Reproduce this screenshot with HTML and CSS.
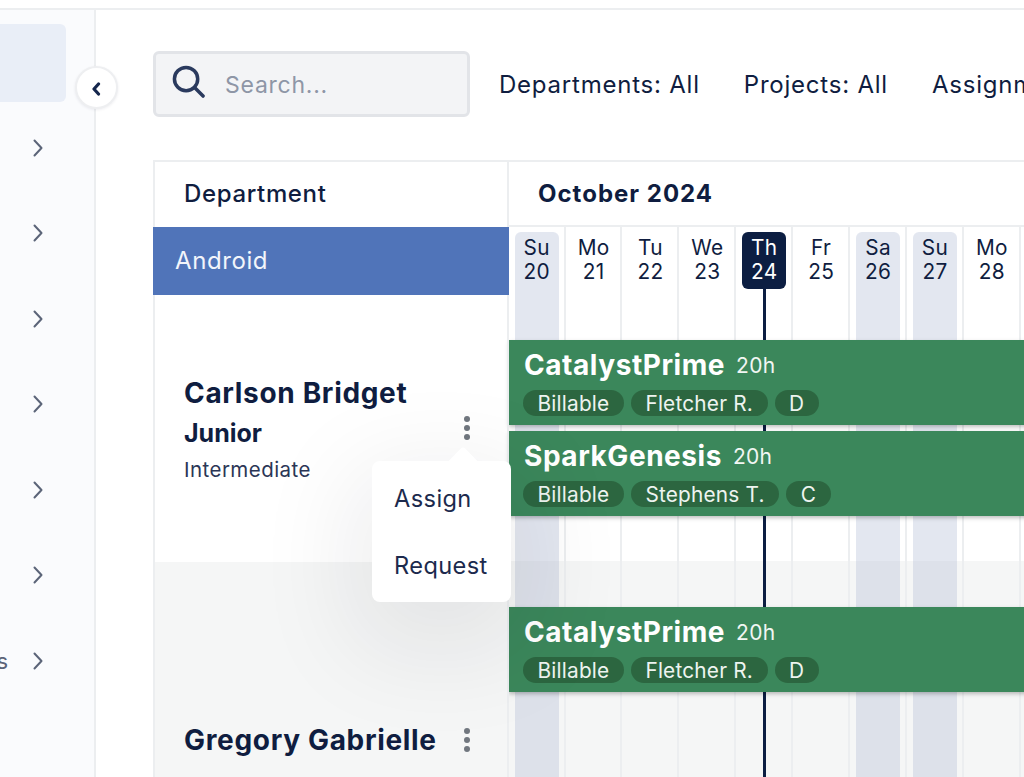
FILE: index.html
```html
<!DOCTYPE html>
<html lang="en">
<head>
<meta charset="utf-8">
<title>Schedule</title>
<link rel="stylesheet" href="styles.css">
</head>
<body>
<div class="topbar"></div>
<div class="app">
  <aside class="sidebar">
    <div class="nav-active"></div>
    <div class="nav-list">
      <div class="nav-item"><svg class="chev" viewBox="0 0 10 18"><path d="M1.5 1.5 8.5 9l-7 7.5"/></svg></div>
      <div class="nav-item"><svg class="chev" viewBox="0 0 10 18"><path d="M1.5 1.5 8.5 9l-7 7.5"/></svg></div>
      <div class="nav-item"><svg class="chev" viewBox="0 0 10 18"><path d="M1.5 1.5 8.5 9l-7 7.5"/></svg></div>
      <div class="nav-item"><svg class="chev" viewBox="0 0 10 18"><path d="M1.5 1.5 8.5 9l-7 7.5"/></svg></div>
      <div class="nav-item"><svg class="chev" viewBox="0 0 10 18"><path d="M1.5 1.5 8.5 9l-7 7.5"/></svg></div>
      <div class="nav-item"><svg class="chev" viewBox="0 0 10 18"><path d="M1.5 1.5 8.5 9l-7 7.5"/></svg></div>
      <div class="nav-item"><span class="nav-label">Settings</span><svg class="chev" viewBox="0 0 10 18"><path d="M1.5 1.5 8.5 9l-7 7.5"/></svg></div>
    </div>
  </aside>
  <button class="collapse" aria-label="Collapse"><svg viewBox="0 0 10 14"><path d="M7.5 2 3 7l4.5 5"/></svg></button>
  <main class="main">
    <div class="toolbar">
      <label class="search">
        <svg class="search-icon" viewBox="0 0 34 34"><circle cx="14.5" cy="14.5" r="12"/><path d="M23.5 23.5 32 32"/></svg>
        <input class="search-input" placeholder="Search...">
      </label>
      <div class="filters">
        <span>Departments: All</span>
        <span>Projects: All</span>
        <span>Assignments: All</span>
      </div>
    </div>
    <div class="table">
      <div class="left">
        <div class="left-head">Department</div>
        <div class="dept">Android</div>
        <div class="person person-one">
          <div class="name">Carlson Bridget</div>
          <div class="line">
            <span class="level">Junior</span>
            <span class="dots"><i></i><i></i><i></i></span>
          </div>
          <div class="grade">Intermediate</div>
          <div class="popover">
            <span class="popover-arrow"></span>
            <div class="popover-item">Assign</div>
            <div class="popover-item">Request</div>
          </div>
        </div>
        <div class="person person-two">
          <div class="line">
            <span class="name">Gregory Gabrielle</span>
            <span class="dots"><i></i><i></i><i></i></span>
          </div>
        </div>
      </div>
      <div class="right">
        <div class="month">October 2024</div>
        <div class="timeline">
          <div class="band"></div>
          <div class="columns">
            <div class="day weekend"><span>Su<br>20</span></div>
            <div class="day"><span>Mo<br>21</span></div>
            <div class="day"><span>Tu<br>22</span></div>
            <div class="day"><span>We<br>23</span></div>
            <div class="day today"><span>Th<br>24</span></div>
            <div class="day"><span>Fr<br>25</span></div>
            <div class="day weekend"><span>Sa<br>26</span></div>
            <div class="day weekend"><span>Su<br>27</span></div>
            <div class="day"><span>Mo<br>28</span></div>
            <div class="day"><span></span></div>
          </div>
          <div class="bars">
            <div class="bar">
              <div class="bar-title"><strong>CatalystPrime</strong><span>20h</span></div>
              <div class="tags"><span>Billable</span><span>Fletcher R.</span><span>D</span></div>
            </div>
            <div class="bar">
              <div class="bar-title"><strong>SparkGenesis</strong><span>20h</span></div>
              <div class="tags"><span>Billable</span><span>Stephens T.</span><span>C</span></div>
            </div>
            <div class="bar bar-next">
              <div class="bar-title"><strong>CatalystPrime</strong><span>20h</span></div>
              <div class="tags"><span>Billable</span><span>Fletcher R.</span><span>D</span></div>
            </div>
          </div>
        </div>
      </div>
    </div>
  </main>
</div>
</body>
</html>
```

FILE: styles.css
```css
* { box-sizing: border-box; }
html, body { height: 100%; }
body {
  margin: 0;
  height: 777px;
  overflow: hidden;
  background: #fff;
  color: #0f1d40;
  font-family: Inter, "Liberation Sans", sans-serif;
}
.topbar { height: 10px; border-bottom: 2px solid #eceef0; }
.app { position: relative; display: flex; height: 767px; }

/* Sidebar */
.sidebar {
  position: relative;
  flex: 0 0 96px;
  background: #fafbfd;
  border-right: 2px solid #eceef0;
  overflow: hidden;
  padding-top: 14px;
}
.nav-active { width: 66px; height: 78px; background: #e9eef7; border-radius: 0 6px 6px 0; }
.nav-list { padding-top: 3px; }
.nav-item {
  height: 85.5px;
  width: 43px;
  display: flex;
  align-items: center;
  justify-content: flex-end;
  gap: 25px;
  color: #5b6478;
  font-size: 22px;
}
.nav-label { flex: none; }
.chev { flex: none; width: 10px; height: 18px; fill: none; stroke: #5b6478; stroke-width: 2; stroke-linecap: round; stroke-linejoin: round; }
.collapse {
  position: absolute;
  left: 75px;
  top: 56px;
  width: 43px;
  height: 43px;
  padding: 0;
  display: flex;
  align-items: center;
  justify-content: center;
  background: #fff;
  border: 2px solid #eeeff1;
  border-radius: 50%;
  box-shadow: 0 1px 3px rgba(20, 30, 60, .08);
}
.collapse svg { width: 10px; height: 14px; margin: 2px 0 0 -2px; fill: none; stroke: #15264d; stroke-width: 3.2; stroke-linecap: round; stroke-linejoin: round; }

/* Main */
.main { flex: 1; min-width: 0; padding: 41px 0 0 57px; overflow: hidden; }
.toolbar { display: flex; align-items: center; gap: 29px; height: 66px; white-space: nowrap; }
.search {
  flex: 0 0 317px;
  min-width: 0;
  height: 66px;
  display: flex;
  align-items: center;
  gap: 20px;
  padding-left: 16px;
  background: #f3f4f6;
  border: 3px solid #e2e4e8;
  border-radius: 6px;
}
.search-icon { flex: none; width: 33px; height: 33px; margin-bottom: 5px; fill: none; stroke: #2a3a5e; stroke-width: 3.6; stroke-linecap: round; }
.search-input { flex: 1; width: 0; min-width: 0; border: 0; outline: 0; padding: 2px 0 0; background: transparent; font: 400 23px Inter, sans-serif; letter-spacing: .75px; }
.search-input::placeholder { color: #8e96a6; opacity: 1; }
.filters { display: flex; gap: 44px; font-size: 24px; letter-spacing: .78px; }

/* Table */
.table {
  display: flex;
  margin-top: 43px;
  width: 900px;
  height: 620px;
  border-top: 2px solid #eceef0;
}
.left { position: relative; z-index: 2; flex: 0 0 356px; border-left: 2px solid #eceef0; }
.left-head { height: 65px; padding: 0 0 2px 29px; display: flex; align-items: center; font-size: 24px; font-weight: 500; letter-spacing: .65px; border-right: 2px solid #eceef0; }
.dept { height: 68px; margin-left: -2px; padding: 0 0 1px 22px; display: flex; align-items: center; color: #f2f5fb; background: #5074b9; font-size: 24px; letter-spacing: .6px; }
.person { position: relative; padding: 0 37px 0 29px; border-right: 2px solid #eceef0; }
.person-one { z-index: 3; height: 267px; padding-top: 82px; }
.person-two { height: 240px; padding-top: 162px; background: #f5f6f6; }
.name { font-size: 28px; font-weight: 700; line-height: 32px; letter-spacing: .67px; }
.line { display: flex; align-items: center; justify-content: space-between; }
.level { font-size: 25px; font-weight: 700; line-height: 32px; margin-top: 8px; }
.grade { margin-top: 6px; font-size: 20.5px; line-height: 30px; color: #2b3656; letter-spacing: .45px; }
.dots { display: flex; flex-direction: column; gap: 3px; }
.dots i { width: 6px; height: 6px; border-radius: 50%; background: #71777f; }
.person-one .dots { position: relative; top: -1px; }
.popover {
  position: absolute;
  left: 217px;
  top: 166px;
  width: 139px;
  height: 141px;
  padding: 3.5px 0 0 22px;
  background: #fff;
  border-radius: 8px;
  box-shadow: 0 30px 100px 20px rgba(20, 30, 40, .08);
}
.popover-arrow {
  position: absolute;
  left: 80px;
  top: -10px;
  width: 22px;
  height: 22px;
  background: #fff;
  transform: rotate(45deg);
  border-radius: 3px;
}
.popover-item { position: relative; height: 67px; display: flex; align-items: center; font-size: 23.6px; color: #1c2a4d; letter-spacing: .4px; }

/* Timeline */
.right { flex: 1; min-width: 0; }
.month { height: 65px; padding-left: 29px; display: flex; align-items: center; font-size: 24px; font-weight: 700; letter-spacing: 1px; border-bottom: 2px solid #eceef0; }
.timeline { position: relative; height: 553px; }
.band { position: absolute; left: 0; right: 0; top: 334px; bottom: 0; background: #f5f6f6; }
.columns { position: absolute; inset: 0 0 0 -.3px; display: flex; }
.day { position: relative; flex: 0 0 56.9px; padding: 5px 4.9px 0 6px; border-right: 2px solid #eceef0; font-size: 20.8px; line-height: 24px; letter-spacing: .3px; text-align: center; }
.day span { display: block; height: 57px; padding-top: 4px; border-radius: 6px; }
.weekend::before { content: ""; position: absolute; left: 6px; width: 44px; top: 5px; bottom: 0; background: rgba(182, 192, 215, .38); border-radius: 6px 6px 0 0; }
.weekend span { position: relative; }
.today span { position: relative; z-index: 1; background: #0c1e42; color: #fff; }
.today::after { content: ""; position: absolute; left: 26.5px; top: 59px; bottom: 0; width: 3px; background: #0c1e42; }
.bars { position: relative; padding-top: 113px; }
.bar {
  height: 85px;
  margin-bottom: 6px;
  padding: 8px 0 0 14px;
  background: #3b875b;
  color: #fff;
  box-shadow: 0 2px 4px rgba(0, 0, 0, .25);
}
.bar-next { margin-top: 91px; }
.bar-title { display: flex; align-items: center; gap: 11px; height: 34px; }
.bar-title strong { margin-left: 1px; font-size: 28px; font-weight: 700; letter-spacing: .55px; }
.bar-title span { font-size: 21px; letter-spacing: .3px; color: #f1f6f3; }
.tags { display: flex; gap: 7px; margin-top: 8px; }
.tags span { height: 26px; padding: 0 14.5px; display: flex; align-items: center; border-radius: 13px; background: #2c6640; color: #eef4f0; font-size: 20.8px; letter-spacing: .2px; }
```
